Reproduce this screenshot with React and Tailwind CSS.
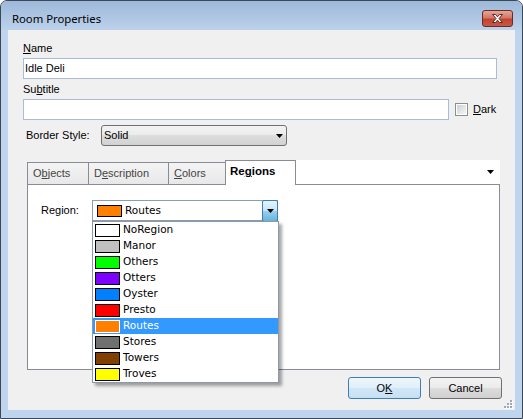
import React from "react";

const regions = [
  { name: "NoRegion", color: "#ffffff" },
  { name: "Manor", color: "#c0c0c0" },
  { name: "Others", color: "#00ff00" },
  { name: "Otters", color: "#8000ff" },
  { name: "Oyster", color: "#0080ff" },
  { name: "Presto", color: "#ff0000" },
  { name: "Routes", color: "#ff8000" },
  { name: "Stores", color: "#707070" },
  { name: "Towers", color: "#804000" },
  { name: "Troves", color: "#ffff00" },
];

function Arrow() {
  return (
    <svg width="7" height="4" viewBox="0 0 7 4">
      <path d="M0 0h7L3.5 4z" fill="#000" />
    </svg>
  );
}

export default function App() {
  return (
    <div className="w-[523px] h-[419px] bg-white font-['Liberation_Sans',Arial,sans-serif] text-[11px] text-black">
      <div className="w-full h-full rounded-t-[7px] border border-[#3d4856] bg-[#bfd5ed] flex flex-col">
        {/* Title bar */}
        <div className="h-[29px] shrink-0 rounded-t-[6px] bg-gradient-to-b from-[#9db8d9] to-[#bcd2eb] flex justify-between pl-[11px] pr-[9px]">
          <div className="pt-[10px] h-[16px] leading-[16px] text-[11.3px] font-['Noto_Sans',sans-serif] text-black">
            Room Properties
          </div>
          <div className="mt-[9px] w-[31px] h-[17px] rounded-[3px] border border-[#6b2a22] bg-[linear-gradient(#e8a698,#d47766_45%,#c2432f_55%,#c7584a)] flex items-center justify-center">
            <svg width="13" height="11" viewBox="0 0 13 11">
              <path
                d="M1.5 1.5h3l2 2.3 2-2.3h3l-3.5 4 3.5 4h-3l-2-2.3-2 2.3h-3l3.5-4z"
                fill="#fff"
                stroke="#5a2a24"
                strokeWidth="1"
                strokeLinejoin="round"
              />
            </svg>
          </div>
        </div>

        {/* Client area */}
        <div className="relative ml-[7px] w-[507px] h-[380px] bg-[#f0f0f0]">
          <div className="pl-[15px] pt-[12px]">
            <div className="h-[13px] leading-[13px]">
              <span className="underline">N</span>ame
            </div>
            <div className="mt-[3px] w-[474px] h-[21px] border border-[#a9bcd4] bg-white flex items-center pl-[1px]">
              Idle Deli
            </div>
            <div className="mt-[4px] h-[13px] leading-[13px]">
              Su<span className="underline">b</span>title
            </div>
            <div className="mt-[3px] flex items-center h-[21px]">
              <div className="w-[426px] h-[21px] border border-[#a9bcd4] bg-white" />
              <div className="ml-[6px] w-[13px] h-[13px] border border-[#8e8f8f] bg-white p-px">
                <div className="w-full h-full bg-gradient-to-br from-[#cdd1d6] to-[#f5f5f5]" />
              </div>
              <div className="ml-[5px]">
                <span className="underline">D</span>ark
              </div>
            </div>
            <div className="mt-[5px] flex items-center h-[21px]">
              <div className="ml-[3px] w-[75px]">Border Style:</div>
              <div className="w-[186px] h-[21px] rounded-[3px] border border-[#707070] bg-[linear-gradient(#f3f3f3,#ebebeb_50%,#dddddd_50%,#d2d2d2)] flex items-center justify-between pl-[2px] pr-[3px]">
                <span>Solid</span>
                <Arrow />
              </div>
            </div>

            {/* Tabs */}
            <div className="mt-[14px] ml-[4px] w-[473px]">
              <div className="flex items-start h-[24px]">
                <div className="mt-[2px] w-[61px] h-[22px] border-l border-t border-[#898c95] bg-[linear-gradient(#f4f4f4,#e8e8e8)] pl-[5px] flex items-center text-[#444]">
                  O<span className="underline">b</span>jects
                </div>
                <div className="mt-[2px] w-[80px] h-[22px] border-l border-t border-[#898c95] bg-[linear-gradient(#f4f4f4,#e8e8e8)] pl-[5px] flex items-center text-[#444]">
                  D<span className="underline">e</span>scription
                </div>
                <div className="mt-[2px] w-[57px] h-[22px] border-l border-t border-[#898c95] bg-[linear-gradient(#f4f4f4,#e8e8e8)] pl-[5px] flex items-center text-[#444]">
                  <span className="underline">C</span>olors
                </div>
                <div className="relative z-10 w-[71px] h-[25px] border-x border-t border-[#898c95] bg-white pl-[4px] pb-[2px] flex items-center font-bold text-[11.5px]">
                  Re<span className="underline">g</span>ions
                </div>
                <div className="flex-1 h-[24px] bg-white flex items-center justify-end pr-[6px] pb-[1px]">
                  <Arrow />
                </div>
              </div>
              <div className="h-[186px] border border-[#898c95] bg-white">
                <div className="mt-[15px] flex items-center h-[21px]">
                  <div className="ml-[13px] w-[51px]">Region:</div>
                  <div className="relative w-[186px] h-[21px] border border-[#8c9db3] bg-white flex items-center font-['DejaVu_Sans',sans-serif] text-[10.5px]">
                    <div className="ml-[4px] w-[25px] h-[12px] border border-black bg-[#ff8000]" />
                    <span className="ml-[3px]">Routes</span>
                    <div className="absolute right-[-1px] top-[-1px] w-[16px] h-[22px] rounded-[2px] border border-[#3c7fb1] bg-[linear-gradient(#e5f4fc,#c4e5f6_50%,#98d1ef_50%,#68b3db)] flex items-center justify-center">
                      <Arrow />
                    </div>
                  </div>
                </div>
              </div>
            </div>

            {/* Buttons */}
            <div className="mt-[7px] flex justify-end gap-[8px] pr-[13px]">
              <div className="w-[73px] h-[22px] rounded-[3px] border border-[#3c7fb1] bg-[linear-gradient(#eef6fc,#e0eff9_50%,#d1e7f6_50%,#c6e0f3)] flex items-center justify-center">
                O<span className="underline">K</span>
              </div>
              <div className="w-[73px] h-[22px] rounded-[3px] border border-[#707070] bg-[linear-gradient(#f3f3f3,#ebebeb_50%,#dddddd_50%,#d0d0d0)] flex items-center justify-center">
                Cancel
              </div>
            </div>
          </div>

          {/* Dropdown list overlay */}
          <div className="absolute left-[84px] top-[191px] w-[187px] h-[162px] border border-[#8f98a6] bg-white shadow-[3px_3px_3px_rgba(0,0,0,0.35)] font-['DejaVu_Sans',sans-serif] text-[10.5px]">
            {regions.map((r) => {
              const sel = r.name === "Routes";
              return (
                <div
                  key={r.name}
                  className={
                    sel
                      ? "h-[16px] flex items-center pl-[2px] bg-[#3399ff] text-white"
                      : "h-[16px] flex items-center pl-[2px] text-black"
                  }
                >
                  <div
                    className={
                      sel
                        ? "w-[25px] h-[13px] border border-white"
                        : "w-[25px] h-[13px] border border-black"
                    }
                    style={{ backgroundColor: r.color }}
                  />
                  <span className="ml-[3px]">{r.name}</span>
                </div>
              );
            })}
          </div>

          {/* Resize grip */}
          <svg className="absolute right-[2px] bottom-[1px]" width="10" height="10" viewBox="0 0 10 10">
            {[
              [7, 1],
              [4, 4],
              [7, 4],
              [1, 7],
              [4, 7],
              [7, 7],
            ].map(([x, y], i) => (
              <g key={i}>
                <rect x={x + 1} y={y + 1} width="2" height="2" fill="#fff" />
                <rect x={x} y={y} width="2" height="2" fill="#a0a8b4" />
              </g>
            ))}
          </svg>
        </div>
      </div>
    </div>
  );
}
